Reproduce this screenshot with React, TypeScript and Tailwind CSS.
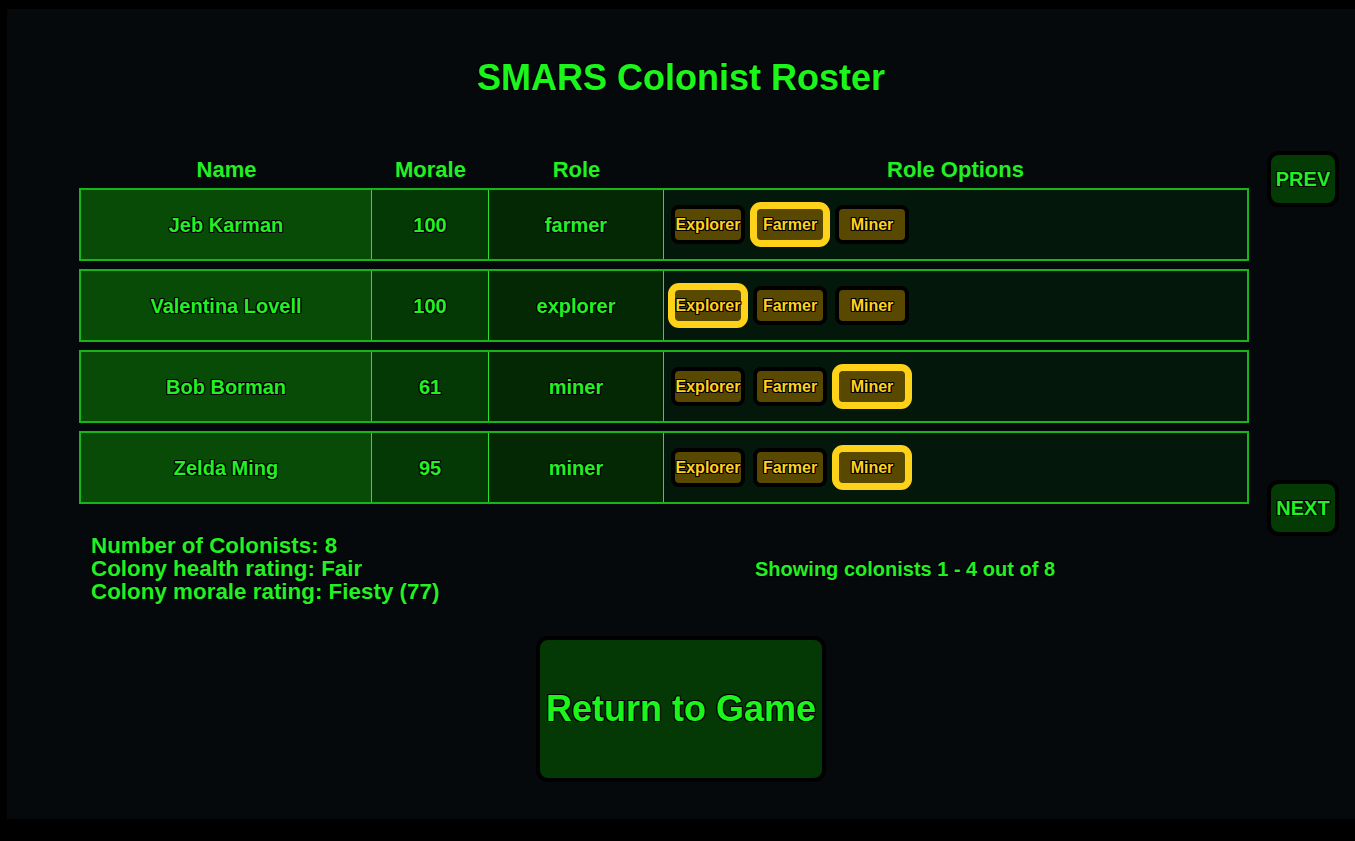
const colonists = [
  { name: "Jeb Karman", morale: 100, role: "farmer" },
  { name: "Valentina Lovell", morale: 100, role: "explorer" },
  { name: "Bob Borman", morale: 61, role: "miner" },
  { name: "Zelda Ming", morale: 95, role: "miner" },
];

const roles = ["Explorer", "Farmer", "Miner"];

const outline = "[text-shadow:-1px_-1px_0_#000,1px_-1px_0_#000,-1px_1px_0_#000,1px_1px_0_#000,0_1px_0_#000,0_-1px_0_#000,1px_0_0_#000,-1px_0_0_#000]";

function RoleButton({ label, active }: { label: string; active: boolean }) {
  return (
    <button
      className={`w-[74px] h-[39px] pt-[1px] rounded-lg border-4 bg-[#584800] text-[16px] leading-none font-bold text-[#ffd21a] ${outline} ${
        active ? "border-[#ffd21a] ring-[3px] ring-[#ffd21a]" : "border-black"
      }`}
    >
      {label}
    </button>
  );
}

function NavButton({ label }: { label: string }) {
  return (
    <button
      className={`w-[72px] h-[56px] rounded-xl border-4 border-black bg-[#043a04] text-[20px] font-bold text-[#22f022] ${outline}`}
    >
      {label}
    </button>
  );
}

export default function App() {
  return (
    <div className="min-h-[841px] bg-black pl-[7px] pt-[9px] font-['Liberation_Sans',Arial,sans-serif]">
      <div className="h-[810px] bg-[#05090c] text-[#22f022] flex flex-col">
        <h1 className={`mt-[48px] text-center text-[36px] leading-[42px] font-bold text-[#1cf51c] ${outline}`}>
          SMARS Colonist Roster
        </h1>

        <div className="mt-[56px] flex pl-[72px]">
          <div className="w-[1170px]">
            <div className="flex h-[28px] items-center border-x-2 border-transparent text-[22px] font-bold">
              <div className="w-[291px] text-center">Name</div>
              <div className="w-[117px] text-center">Morale</div>
              <div className="w-[175px] text-center">Role</div>
              <div className="flex-1 text-center">Role Options</div>
            </div>
            <div className="mt-[5px] flex flex-col gap-[8px]">
              {colonists.map((c) => (
                <div key={c.name} className="flex h-[73px] border-2 border-[#17b517] text-[20px] font-bold">
                  <div className={`w-[291px] flex items-center justify-center border-r border-[#2ee02e] bg-[#074b07] ${outline}`}>
                    {c.name}
                  </div>
                  <div className={`w-[117px] flex items-center justify-center border-r border-[#2ee02e] bg-[#043804] ${outline}`}>
                    {c.morale}
                  </div>
                  <div className={`w-[175px] flex items-center justify-center border-r border-[#2ee02e] bg-[#032803] ${outline}`}>
                    {c.role}
                  </div>
                  <div className="flex-1 flex items-center gap-[8px] pl-[7px] bg-[#03180a]">
                    {roles.map((r) => (
                      <RoleButton key={r} label={r} active={r.toLowerCase() === c.role} />
                    ))}
                  </div>
                </div>
              ))}
            </div>
          </div>
          <div className="ml-[18px] flex flex-col">
            <div className="-mt-[4px]">
              <NavButton label="PREV" />
            </div>
            <div className="mt-[273px]">
              <NavButton label="NEXT" />
            </div>
          </div>
        </div>

        <div className="-mt-[2px] flex items-center pl-[84px] font-bold">
          <div className={`w-[664px] text-[22.4px] leading-[23px] ${outline}`}>
            <div>Number of Colonists: 8</div>
            <div>Colony health rating: Fair</div>
            <div>Colony morale rating: Fiesty (77)</div>
          </div>
          <div className={`text-[20px] ${outline}`}>Showing colonists 1 - 4 out of 8</div>
        </div>

        <div className="mt-[33px] flex justify-center">
          <button
            className={`w-[290px] h-[146px] rounded-xl border-4 border-black bg-[#043804] text-[36px] font-bold text-[#1cf51c] ${outline}`}
          >
            Return to Game
          </button>
        </div>
      </div>
    </div>
  );
}
